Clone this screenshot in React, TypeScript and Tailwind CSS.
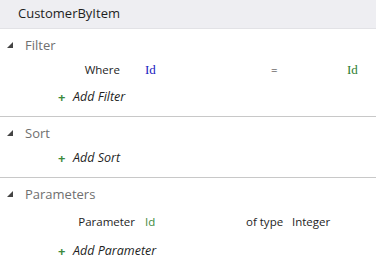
import React from "react";

const font = { fontFamily: '"Open Sans", "Noto Sans", sans-serif' };

function Tri() {
  return (
    <svg width="6" height="6" viewBox="0 0 6 6" className="shrink-0">
      <polygon points="6,0 6,6 0,6" fill="#444" />
    </svg>
  );
}

function SectionHeader({ title }: { title: string }) {
  return (
    <div className="flex items-center h-[22px] pl-[7px]">
      <Tri />
      <span className="ml-[12px] text-[13px] text-[#6f6f6f] leading-none">{title}</span>
    </div>
  );
}

function Add({ label }: { label: string }) {
  return (
    <div className="flex items-center h-[28px] pl-[58px]">
      <span className="text-[#3c8a3c] text-[13px] font-bold leading-none w-[15px]">+</span>
      <span className="italic text-[12.5px] text-[#1e1e1e] leading-none">{label}</span>
    </div>
  );
}

export default function App() {
  return (
    <div className="w-[376px] h-[264px] bg-white overflow-hidden" style={font}>
      <div className="h-[29px] bg-[#eeeef2] border-b border-[#e2e2e6] flex items-center pl-[18px] text-[13px] text-[#1e1e1e]">
        CustomerByItem
      </div>
      <div className="pt-[5px]">
        <SectionHeader title="Filter" />
        <div className="flex items-center h-[26px] mt-[1px] text-[11.5px]">
          <span className="w-[120px] text-right text-[#1e1e1e]">Where</span>
          <span className="ml-[25px] w-[126px] text-[#2020c0]" style={{ fontFamily: '"Liberation Serif", serif', fontSize: 13 }}>Id</span>
          <span className="w-[76px] text-[#1e1e1e]">=</span>
          <span className="text-[#2e7d2e]" style={{ fontFamily: '"Liberation Serif", serif', fontSize: 13 }}>Id</span>
        </div>
        <Add label="Add Filter" />
        <div className="h-[5px]" />
      </div>
      <div className="border-t border-[#c8c8c8] pt-[5px]">
        <SectionHeader title="Sort" />
        <Add label="Add Sort" />
        <div className="h-[5px]" />
      </div>
      <div className="border-t border-[#c8c8c8] pt-[5px]">
        <SectionHeader title="Parameters" />
        <div className="flex items-center h-[30px] mt-[2px] text-[11.5px] text-[#1e1e1e]">
          <span className="w-[135px] text-right">Parameter</span>
          <span className="ml-[10px] w-[101px] text-[#3c8a3c]">Id</span>
          <span className="w-[46px]">of type</span>
          <span>Integer</span>
        </div>
        <Add label="Add Parameter" />
      </div>
    </div>
  );
}
